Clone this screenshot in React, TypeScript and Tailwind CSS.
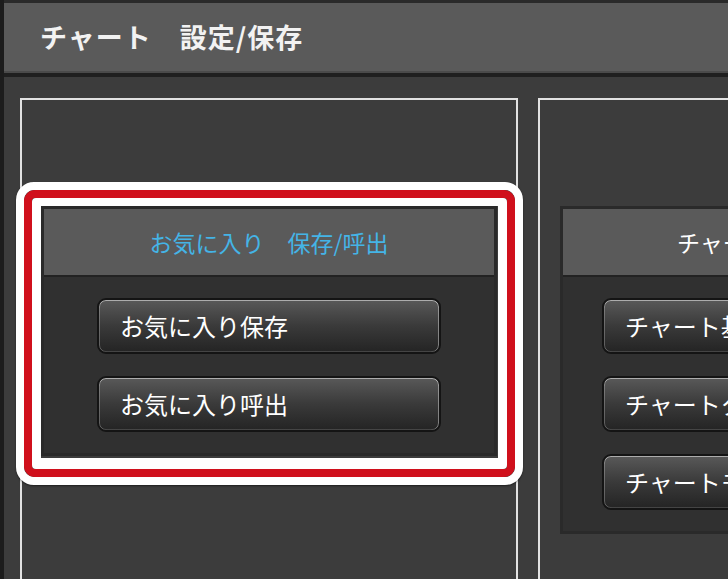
import React from 'react';

const FONT = "font-['Noto_Sans_CJK_JP','Noto_Sans',sans-serif]";

function ChartButton({ label }: { label: string }) {
  return (
    <button
      className="h-[56px] w-[344px] shrink-0 rounded-[9px] border-2 border-[#141414] bg-linear-to-b from-[#595959] via-[#3a3a3a] to-[#242424] pl-[21px] text-left text-[24px] leading-none text-white shadow-[inset_0_1px_0_rgba(255,255,255,0.5),inset_1px_0_0_rgba(255,255,255,0.25),inset_-1px_0_0_rgba(255,255,255,0.4),inset_0_-1px_0_rgba(255,255,255,0.15)] whitespace-nowrap overflow-hidden"
    >
      {label}
    </button>
  );
}

function Card({
  title,
  titleClass,
  children,
  bodyClass,
}: {
  title: string;
  titleClass: string;
  children: React.ReactNode;
  bodyClass: string;
}) {
  return (
    <div className="border-[3px] border-[#2a2a2a]">
      <div className={`flex h-[68px] shrink-0 items-center border-b-2 border-[#222222] bg-[#5a5a5a] text-[23px] whitespace-nowrap ${titleClass}`}>
        {title}
      </div>
      <div className={`flex flex-col gap-[22px] bg-[#303030] pt-[21px] pb-[21px] ${bodyClass}`}>{children}</div>
    </div>
  );
}

export default function App() {
  return (
    <div className={`relative flex h-[579px] w-[728px] overflow-hidden bg-[#3c3c3c] ${FONT}`}>
      <div className="w-[4px] shrink-0 bg-[#1c1c1c]" />
      <div className="flex min-w-0 flex-1 flex-col">
        <div className="h-[3px] shrink-0 bg-[#2a2a2a]" />
        <div className="flex h-[68px] shrink-0 items-center bg-[#5a5a5a] pl-[36px] text-[27px] font-bold tracking-[1px] text-[#f2f2f2] whitespace-nowrap">
          チャート　設定/保存
        </div>
        <div className="h-[2px] shrink-0 bg-[#4a4a4a]" />
        <div className="h-[4px] shrink-0 bg-[#1f1f1f]" />
        <div className="flex shrink-0 gap-[20px] pt-[21px] pl-[16px]">
          <div className="h-[520px] w-[498px] shrink-0 border-2 border-[#e2e2e2] px-[19px] pt-[106px]">
            <Card title="お気に入り　保存/呼出" titleClass="justify-center text-[#44b4e6]" bodyClass="items-center">
              <ChartButton label="お気に入り保存" />
              <ChartButton label="お気に入り呼出" />
            </Card>
          </div>
          <div className="h-[520px] w-[498px] shrink-0 border-2 border-[#e2e2e2] pl-[20px] pr-[19px] pt-[106px]">
            <Card title="チャート設定　保存/呼出" titleClass="pl-[114px] text-white" bodyClass="items-start pl-[39px]">
              <ChartButton label="チャート基本設定" />
              <ChartButton label="チャートタイプ設定" />
              <ChartButton label="チャートモード設定" />
            </Card>
          </div>
        </div>
      </div>

      {/* annotation frame */}
      <div className="pointer-events-none absolute left-[16px] top-[182px] h-[303px] w-[507px] rounded-[18px] border-8 border-white shadow-[0_1px_2px_rgba(0,0,0,0.5)]">
        <div className="h-full w-full rounded-[11px] border-8 border-[#d0101c]">
          <div className="h-full w-full rounded-[4px] border-t-8 border-l-[9px] border-r-[9px] border-b-[11px] border-white" />
        </div>
      </div>
    </div>
  );
}
